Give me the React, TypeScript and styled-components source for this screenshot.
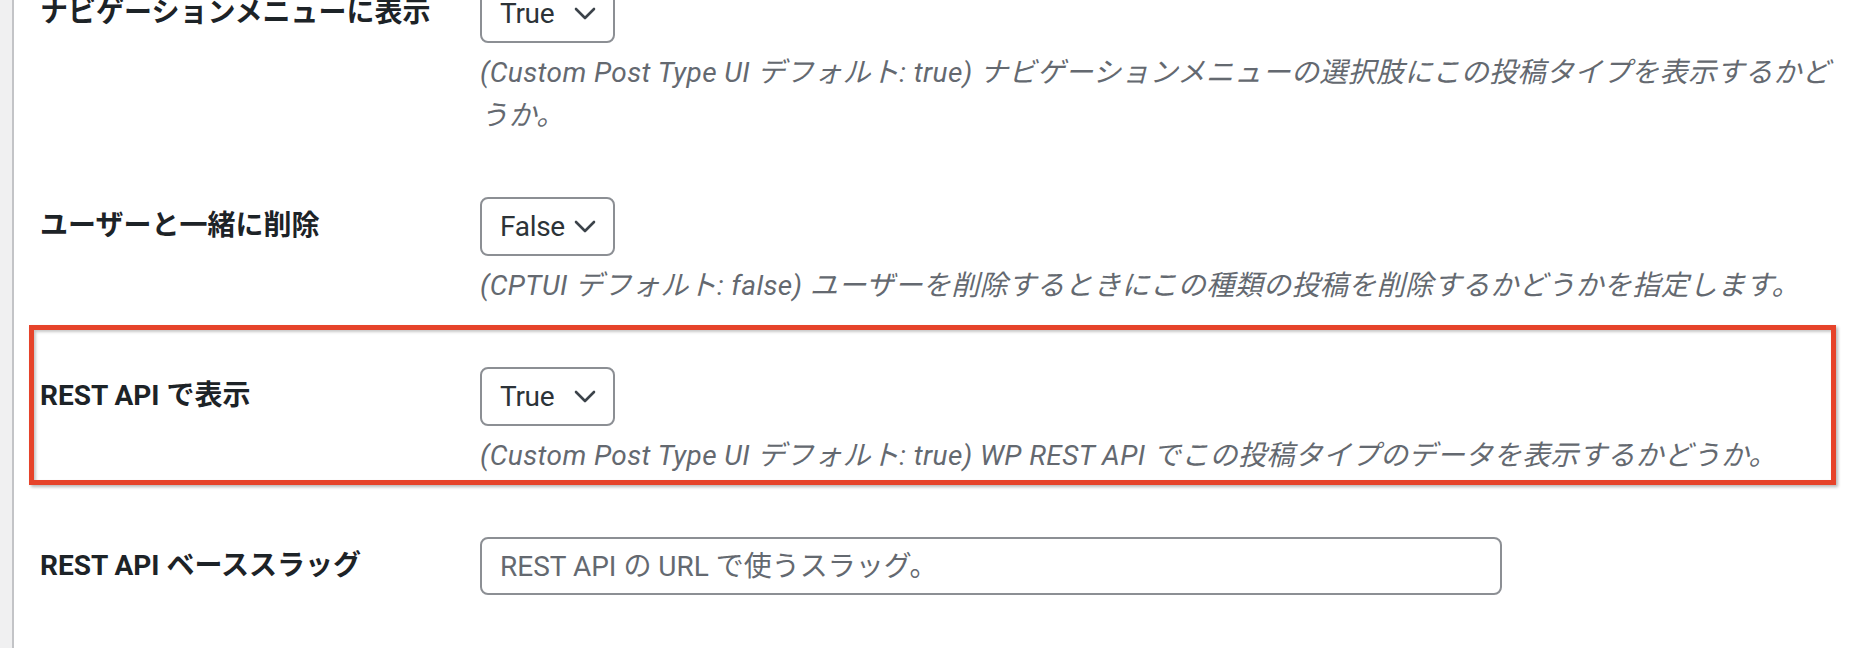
import React from "react";
import styled, { createGlobalStyle, css } from "styled-components";

const GlobalStyle = createGlobalStyle`
  html, body {
    margin: 0;
    background: #fff;
    overflow: hidden;
  }
  body {
    font-family: Roboto, "Noto Sans CJK JP", sans-serif;
    color: #1d2327;
  }
`;

const Page = styled.div`
  display: flex;
  height: 648px;
  overflow: hidden;
`;

const Sidebar = styled.div`
  width: 12px;
  flex-shrink: 0;
  background: #f0f0f1;
  border-right: 2px solid #c3c4c7;
`;

const Content = styled.div`
  flex: 1;
  padding-left: 26px;
  margin-top: -46px;
`;

const Row = styled.div<{ $highlighted?: boolean }>`
  display: grid;
  grid-template-columns: 440px 1360px;
  width: 1800px;
  position: relative;

  ${({ $highlighted }) =>
    $highlighted &&
    css`
      &::after {
        content: "";
        position: absolute;
        top: -12px;
        bottom: 22px;
        left: -11px;
        right: 4px;
        border: 5px solid #e6432a;
        box-shadow: 2px 2px 3px rgba(0, 0, 0, 0.28),
          inset 2px 2px 3px rgba(0, 0, 0, 0.22);
        pointer-events: none;
      }
    `}
`;

const Label = styled.div`
  padding-top: 41px;
  font-size: 28px;
  font-weight: 700;
  line-height: 36px;
  color: #1d2327;
  white-space: nowrap;
`;

const Field = styled.div`
  padding: 30px 0;
`;

const SelectBox = styled.div`
  display: inline-flex;
  align-items: center;
  box-sizing: border-box;
  width: 135px;
  height: 59px;
  padding: 0 17px 0 18px;
  border: 2px solid #8c8f94;
  border-radius: 8px;
  font-size: 28px;
  letter-spacing: -0.3px;
  color: #2c3338;
  background: #fff;
`;

const SelectValue = styled.span`
  flex: 1;
`;

const Chevron = styled.svg`
  width: 22px;
  height: 14px;
  flex-shrink: 0;
`;

const TextInput = styled.input`
  box-sizing: border-box;
  width: 1022px;
  height: 58px;
  padding: 0 18px;
  border: 2px solid #8c8f94;
  border-radius: 8px;
  font-family: Roboto, "Noto Sans CJK JP", sans-serif;
  font-size: 28px;
  color: #2c3338;
  outline: none;

  &::placeholder {
    color: #646970;
  }
`;

const Description = styled.p`
  margin: 8px 0 0;
  font-size: 28px;
  font-style: italic;
  letter-spacing: 0.4px;
  line-height: 43px;
  color: #646970;
`;

const Select = ({ value }: { value: string }) => (
  <SelectBox>
    <SelectValue>{value}</SelectValue>
    <Chevron viewBox="0 0 22 14">
      <polyline
        points="2,2 11,11 20,2"
        fill="none"
        stroke="#3c434a"
        strokeWidth="2.6"
        strokeLinecap="round"
        strokeLinejoin="round"
      />
    </Chevron>
  </SelectBox>
);

const rows = [
  {
    label: "ナビゲーションメニューに表示",
    value: "True",
    description:
      "(Custom Post Type UI デフォルト: true) ナビゲーションメニューの選択肢にこの投稿タイプを表示するかどうか。",
  },
  {
    label: "ユーザーと一緒に削除",
    value: "False",
    description:
      "(CPTUI デフォルト: false) ユーザーを削除するときにこの種類の投稿を削除するかどうかを指定します。",
  },
  {
    label: "REST API で表示",
    value: "True",
    description:
      "(Custom Post Type UI デフォルト: true) WP REST API でこの投稿タイプのデータを表示するかどうか。",
    highlighted: true,
  },
];

export default function App() {
  return (
    <>
      <GlobalStyle />
      <Page>
        <Sidebar />
        <Content>
          {rows.map((row) => (
            <Row key={row.label} $highlighted={row.highlighted}>
              <Label>{row.label}</Label>
              <Field>
                <Select value={row.value} />
                <Description>{row.description}</Description>
              </Field>
            </Row>
          ))}
          <Row>
            <Label>REST API ベーススラッグ</Label>
            <Field>
              <TextInput placeholder="REST API の URL で使うスラッグ。" />
            </Field>
          </Row>
        </Content>
      </Page>
    </>
  );
}
